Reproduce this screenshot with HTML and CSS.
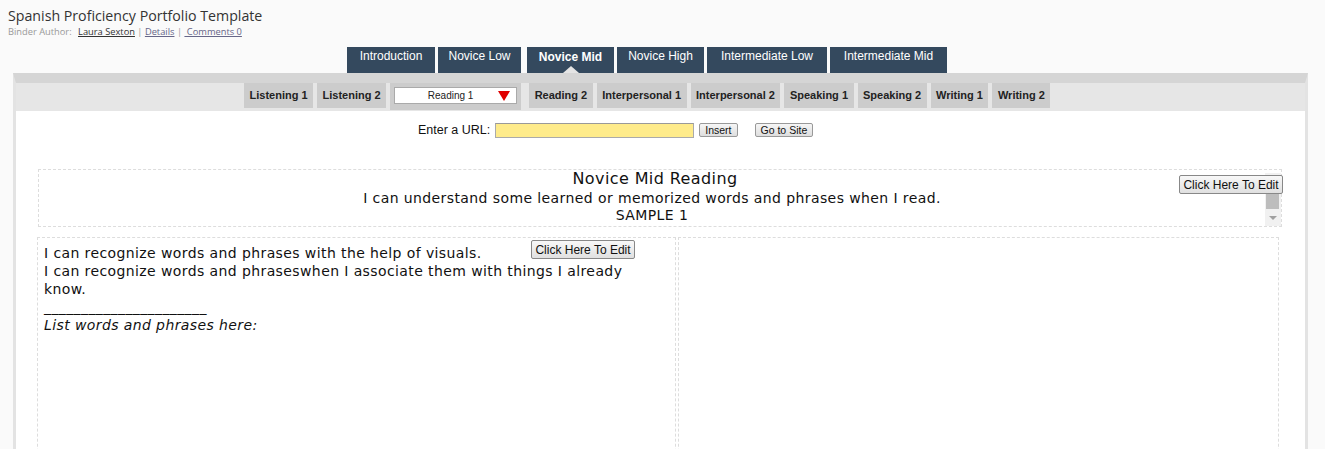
FILE: index.html
```html
<!DOCTYPE html>
<html>
<head>
<meta charset="utf-8">
<link rel="stylesheet" href="styles.css">
</head>
<body>
<div class="top">
  <div class="title">Spanish Proficiency Portfolio Template</div>
  <div class="meta"><span class="lbl">Binder Author:</span> <a class="author">Laura Sexton</a> <span class="sep">|</span> <a class="lnk">Details</a> <span class="sep">|</span> <a class="lnk">&nbsp;Comments 0</a></div>
</div>
<div class="tabs">
  <div class="tab">Introduction</div>
  <div class="tab">Novice Low</div>
  <div class="tab active">Novice Mid</div>
  <div class="tab">Novice High</div>
  <div class="tab">Intermediate Low</div>
  <div class="tab">Intermediate Mid</div>
</div>
<div class="panel">
  <div class="subbar">
    <div class="sub">Listening 1</div>
    <div class="sub">Listening 2</div>
    <div class="selwrap"><div class="sel"><span class="seltxt">Reading 1</span><span class="arrow"></span></div></div>
    <div class="sub">Reading 2</div>
    <div class="sub">Interpersonal 1</div>
    <div class="sub">Interpersonal 2</div>
    <div class="sub">Speaking 1</div>
    <div class="sub">Speaking 2</div>
    <div class="sub">Writing 1</div>
    <div class="sub">Writing 2</div>
  </div>
  <div class="urlrow">
    <span class="urllbl">Enter a URL:</span>
    <span class="urlinput"></span>
    <button class="btn">Insert</button>
    <button class="btn go">Go to Site</button>
  </div>
  <div class="headbox">
    <div class="headtext">
      <div class="h1">Novice Mid Reading</div>
      <div class="h2">I can understand some learned or memorized words and phrases when I read.</div>
      <div class="h2">SAMPLE 1</div>
    </div>
    <div class="scroll"><div class="thumb"></div><div class="down"></div></div>
    <button class="edit edit-head">Click Here To Edit</button>
  </div>
  <div class="cols">
    <div class="box left">
      <button class="edit edit-left">Click Here To Edit</button>
      <div class="line">I can recognize words and phrases with the help of visuals.</div>
      <div class="line">I can recognize words and phraseswhen I associate them with things I already know.</div>
      <div class="line">______________________</div>
      <div class="line it">List words and phrases here:</div>
    </div>
    <div class="box right"></div>
  </div>
</div>
</body>
</html>
```
FILE: styles.css
```css
html, body { margin: 0; padding: 0; }
body { background: #fafafa; font-family: "Liberation Sans", Arial, sans-serif; height: 449px; overflow: hidden; }
.top { padding: 6px 8px 0 8px; height: 47px; box-sizing: border-box; }
.title { font-family: "Open Sans", sans-serif; font-size: 14.2px; line-height: 20px; color: #333; }
.meta { font-family: "Open Sans", sans-serif; font-size: 9.3px; line-height: 12px; color: #999; }
.meta .author { color: #333; text-decoration: underline; margin-left: 4px; }
.meta .lnk { color: #668; text-decoration: underline; }
.meta .sep { color: #999; }
.tabs { display: flex; gap: 3px; padding-left: 347px; height: 26px; }
.tab { background: #34495e; color: #fff; font-size: 12px; line-height: 18px; height: 26px; box-sizing: border-box; padding: 0; text-align: center; white-space: nowrap; }
.tab:nth-child(1) { width: 88px; }
.tab:nth-child(2) { width: 83px; }
.tab:nth-child(3) { width: 87px; margin-left: 3px; }
.tab:nth-child(4) { width: 87px; }
.tab:nth-child(5) { width: 120px; }
.tab:nth-child(6) { width: 117px; }
.tab.active { font-weight: bold; position: relative; line-height: 20px; }
.tab.active::after { content: ""; position: absolute; left: 50%; bottom: 0; margin-left: -8px; border-left: 8px solid transparent; border-right: 8px solid transparent; border-bottom: 7px solid #e4e4e4; }
.panel { margin: 0 17px 0 13px; border: 3px solid #e3e3e3; border-top: 10px solid #d5d5d5; border-bottom: 0; background: #fff; height: 376px; box-sizing: border-box; overflow: hidden; }
.subbar { background: #e6e6e6; height: 28px; display: flex; gap: 4px; padding-left: 228px; align-items: flex-start; }
.sub { background: #ccc; height: 25px; line-height: 24px; font-size: 11px; font-weight: bold; color: #222; padding: 0 5.5px; white-space: nowrap; }
.selwrap { background: #ccc; height: 27px; width: 131px; box-sizing: border-box; padding: 4px 4px 0 4px; margin-right: 4px; }
.sel { background: #fff; border: 1px solid #aaa; height: 17px; box-sizing: border-box; position: relative; font-size: 10px; line-height: 15px; color: #222; text-align: center; padding-right: 20px; padding-left: 10px; }
.arrow { position: absolute; right: 6px; top: 3px; border-left: 6px solid transparent; border-right: 6px solid transparent; border-top: 10px solid #e00000; }
.urlrow { display: flex; align-items: center; padding-left: 402px; margin-top: 11px; height: 16px; }
.urllbl { font-size: 12.5px; color: #111; margin-right: 5px; line-height: 14px; }
.urlinput { width: 199px; height: 15px; background: #feeb8b; border: 1px solid #aaa; box-sizing: border-box; border-top-color: #999; }
.btn { font-family: "Liberation Sans", Arial, sans-serif; font-size: 10.5px; height: 14px; padding: 0 5px; margin-left: 5px; border: 1px solid #999; background: linear-gradient(#f6f6f6, #dedede); border-radius: 2px; color: #111; line-height: 12px; }
.btn.go { margin-left: 17px; }
.headbox { position: relative; margin: 31px 23px 0 22px; height: 58px; border: 1px dashed #ddd; box-sizing: border-box; display: flex; }
.headtext { flex: 1; text-align: center; font-family: "DejaVu Sans", Verdana, sans-serif; color: #111; letter-spacing: 0.4px; }
.h1 { font-size: 16px; line-height: 18px; margin-bottom: 2px; padding-left: 6px; }
.h2 { font-size: 14px; line-height: 17px; }
.scroll { width: 16px; background: #f1f1f1; margin-top: 3px; position: relative; }
.thumb { position: absolute; left: 1px; right: 2px; top: 20px; height: 16px; background: #bdbdbd; }
.down { position: absolute; left: 4px; top: 43px; border-left: 4px solid transparent; border-right: 4px solid transparent; border-top: 4px solid #a0a0a0; }
.edit { position: absolute; font-family: "Liberation Sans", Arial, sans-serif; font-size: 12px; height: 19px; padding: 0 3px; border: 1px solid #888; background: linear-gradient(#f8f8f8, #e0e0e0); border-radius: 2px; color: #111; line-height: 16px; letter-spacing: 0; }
.edit-head { right: -2px; top: 5px; width: 104px; }
.edit-left { right: 40px; top: 2px; width: 104px; }
.cols { display: flex; gap: 2px; margin: 10px 26px 0 21px; }
.box { border: 1px dashed #ddd; height: 240px; box-sizing: border-box; position: relative; }
.left { width: 639px; padding: 6px 6px 0 6px; font-family: "DejaVu Sans", Verdana, sans-serif; font-size: 14px; letter-spacing: 0.4px; line-height: 18px; color: #111; }
.right { flex: 1; }
.it { font-style: italic; }
```
